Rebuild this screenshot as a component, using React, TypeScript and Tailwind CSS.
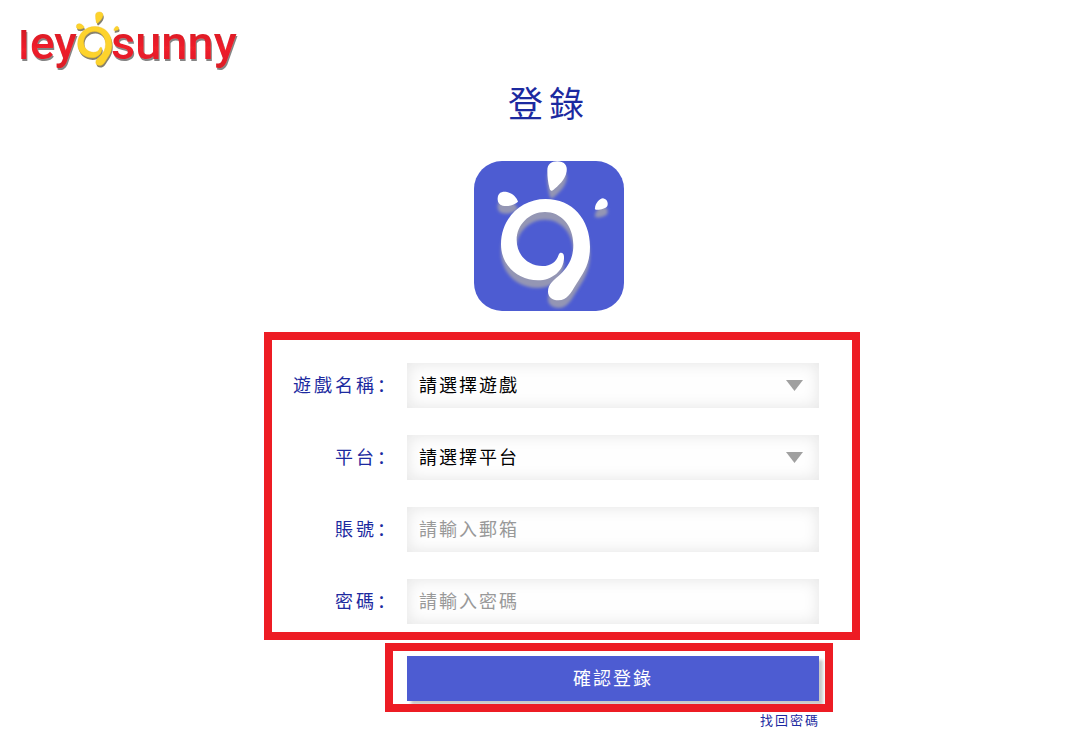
import React from "react";

const RING =
  "M245 147 C325 147 378 208 378 290 C378 345 357 370 337 402 C320 430 310 450 283 451 C265 451 252 440 252 425 C252 402 270 390 290 372 C312 350 328 325 328 285 C328 225 290 186 243 186 C195 186 158 225 158 270 C158 318 195 348 235 348 C262 348 277 335 284 314 C288 304 300 308 300 320 C302 360 265 391 222 391 C160 391 111 345 111 283 C111 205 170 147 245 147Z";
const PETAL_TOP =
  "M250 62 C250 42 262 34 280 34 C300 34 311 46 308 64 C304 90 282 108 267 121 C263 124 259 122 257 116 C252 98 250 80 250 62Z";
const PETAL_LEFT =
  "M101 145 C102 128 114 123 129 126 C145 129 159 143 162 155 C152 165 132 171 116 167 C105 164 100 156 101 145Z";
const PETAL_RIGHT =
  "M393 174 C394 160 406 146 417 145 C428 147 434 158 430 168 C424 177 407 180 396 179 C393 178 392 177 393 174Z";

function SunShape() {
  return (
    <>
      <path d={RING} />
      <path d={PETAL_TOP} />
      <path d={PETAL_LEFT} />
      <path d={PETAL_RIGHT} />
    </>
  );
}

function Brand() {
  return (
    <svg
      viewBox="-8 0 236 62"
      className="h-[62px] w-[236px]"
      role="img"
      aria-label="leyo sunny"
    >
      <defs>
        <filter id="brandShadow" x="-10%" y="-10%" width="120%" height="130%">
          <feDropShadow dx="1" dy="2" stdDeviation="0.5" floodColor="#666" floodOpacity="0.8" />
        </filter>
        <linearGradient id="brandRed" x1="0" y1="0" x2="0" y2="1">
          <stop offset="0" stopColor="#c9151f" />
          <stop offset="0.6" stopColor="#f0202c" />
          <stop offset="1" stopColor="#d81a25" />
        </linearGradient>
      </defs>
      <g
        filter="url(#brandShadow)"
        fill="url(#brandRed)"
        fontFamily="Roboto, sans-serif"
        fontSize="46"
        fontWeight="500"
      >
        <text x="-2" y="49" fontSize="41">I</text>
        <text x="10" y="49">ey</text>
        <text x="91" y="49" fontSize="47">sunny</text>
      </g>
      <g transform="translate(43.4 -2.4) scale(0.1285)">
        <g fill="#85806f" transform="translate(6 16)">
          <SunShape />
        </g>
        <g fill="#fdd32c" stroke="#f0bd20" strokeWidth="3">
          <SunShape />
        </g>
      </g>
    </svg>
  );
}

function AppIcon() {
  return (
    <svg viewBox="30 33 450 450" className="size-[150px]" aria-hidden="true">
      <defs>
        <clipPath id="tile">
          <rect x="30" y="33" width="450" height="450" rx="84" />
        </clipPath>
        <filter id="soft" x="-10%" y="-10%" width="120%" height="120%">
          <feGaussianBlur stdDeviation="4" />
        </filter>
      </defs>
      <g clipPath="url(#tile)">
        <rect x="30" y="33" width="450" height="450" fill="#4d5cd2" />
        <g fill="#9496b4" filter="url(#soft)" transform="translate(0 23)">
          <SunShape />
        </g>
        <g fill="#fff">
          <SunShape />
        </g>
      </g>
    </svg>
  );
}

const FIELD =
  "block h-[45px] w-full appearance-none rounded-none border-0 bg-[#fefefe] pb-1 pl-3 text-lg tracking-[2px] shadow-[inset_0_0_16px_#e4e4e4] outline-none";

function Row({ id, label, children }: { id: string; label: string; children: React.ReactNode }) {
  return (
    <div className="flex items-center gap-[9px]">
      <label
        htmlFor={id}
        className="w-[126px] shrink-0 pb-1 text-right text-lg tracking-[3px] whitespace-nowrap"
      >
        {label}：
      </label>
      <div className="relative min-w-0 flex-1">{children}</div>
    </div>
  );
}

function SelectField({ id, text }: { id: string; text: string }) {
  return (
    <>
      <select id={id} className={`${FIELD} pr-12 text-black`}>
        <option>{text}</option>
      </select>
      <svg
        viewBox="0 0 17 11"
        className="pointer-events-none absolute top-[17px] right-4 h-[11px] w-[17px]"
        aria-hidden="true"
      >
        <path d="M0 0H17L8.5 11Z" fill="#a0a0a0" />
      </svg>
    </>
  );
}

export default function App() {
  return (
    <div
      lang="zh-Hans"
      className="min-h-screen bg-white font-['Noto_Sans_CJK_SC','Noto_Sans_CJK_TC',sans-serif] text-[#1c2aa0]"
    >
      <header className="px-3 pt-2.5">
        <Brand />
      </header>
      <main className="pl-[54px]">
        <form
          className="mx-auto flex w-full max-w-[596px] flex-col"
          onSubmit={(e) => e.preventDefault()}
        >
          <div className="flex flex-col items-center pt-1.5 pr-[26px]">
            <h1 className="text-[35px] leading-12 tracking-[6px]">登錄</h1>
            <div className="pt-[35px] pb-[21px]">
              <AppIcon />
            </div>
          </div>
          <div className="flex flex-col gap-[27px] border-8 border-[#ed1c24] pt-[23px] pr-[33px] pb-2">
            <Row id="game" label="遊戲名稱">
              <SelectField id="game" text="請選擇遊戲" />
            </Row>
            <Row id="platform" label="平台">
              <SelectField id="platform" text="請選擇平台" />
            </Row>
            <Row id="account" label="賬號">
              <input
                id="account"
                type="text"
                placeholder="請輸入郵箱"
                className={`${FIELD} pr-3 text-black placeholder:text-[#999]`}
              />
            </Row>
            <Row id="password" label="密碼">
              <input
                id="password"
                type="password"
                placeholder="請輸入密碼"
                className={`${FIELD} pr-3 text-black placeholder:text-[#999]`}
              />
            </Row>
          </div>
          <div className="mt-[3px] mr-[27px] ml-[121px] overflow-hidden border-8 border-[#ed1c24] pt-[5px] pr-1.5 pb-[3px] pl-3.5">
            <button
              type="submit"
              className="block h-[45px] w-full bg-[#4d5cd2] pb-1 text-lg tracking-[2px] text-white shadow-[4px_4px_3px_#c8c8c8]"
            >
              確認登錄
            </button>
          </div>
          <a
            href="#recover"
            className="mr-10 self-end text-[13px] leading-4 tracking-[2px]"
          >
            找回密碼
          </a>
        </form>
      </main>
    </div>
  );
}
